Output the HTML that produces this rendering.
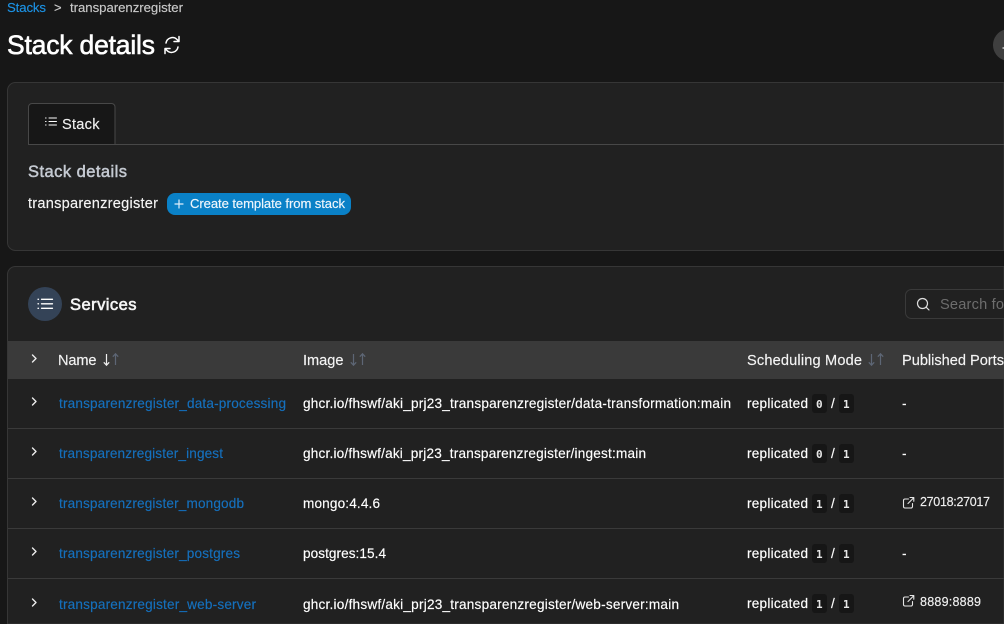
<!DOCTYPE html>
<html><head><meta charset="utf-8"><style>
html,body{margin:0;padding:0;background:#171717;width:1004px;height:624px;overflow:hidden}
svg{display:block}
text{font-family:"Liberation Sans",sans-serif;font-size:13.6px;color:#fff;fill:currentColor;stroke:currentColor;stroke-width:.15}
.m{font-family:"DejaVu Sans Mono",monospace;font-size:11px;font-weight:bold;color:#e8e8e8;stroke-width:0}
.l{color:#1570bd}
.h{color:#f4f4f4;font-size:14.6px}
.p{font-size:12.5px;color:#f0f0f0}
.i{fill:none;stroke:#fff;stroke-width:1.3;stroke-linecap:round;stroke-linejoin:round}
.c{fill:none;stroke:#eee;stroke-width:1.4;stroke-linecap:round;stroke-linejoin:round}
</style></head><body>
<svg width="1004" height="624" viewBox="0 0 1004 624" xmlns="http://www.w3.org/2000/svg">
<rect width="1004" height="624" fill="#171717"/>

<text x="7" y="12" textLength="39" style="font-size:13.2px;color:#1c92e4">Stacks</text>
<text x="54" y="12" style="font-size:13px;color:#ccc">&gt;</text>
<text x="70" y="12" textLength="113" style="font-size:13.2px;color:#c9c9c9">transparenzregister</text>

<text x="7" y="54" textLength="148" style="font-size:26.500px;stroke-width:.6">Stack details</text>
<g fill="none" stroke="#fff" stroke-width="1.5" stroke-linecap="round" stroke-linejoin="round">
<path d="M166 43a6.5 6.5 0 0 1 11-3.5l2 2M179 36.500v5h-5"/>
<path d="M178 47a6.500 6.500 0 0 1-11 3.500l-2-2M165 53.500v-5h5"/>
</g>
<path d="M1004 29.800A16 16 0 0 0 1004 60.200Z" fill="#3f3f3f"/>
<path d="M1002.500 47h1.500v2h-1.500z" fill="#aaa"/>

<path d="M1004 82.500H15.500a8 8 0 0 0-8 8V242.500a8 8 0 0 0 8 8H1004Z" fill="#212121" stroke="#363636"/>
<path d="M28.500 144.500V107a3.500 3.500 0 0 1 3.500-3.500h79.500a3.500 3.500 0 0 1 3.500 3.500v37.500z" fill="#171717" stroke="#484848"/>
<path d="M28 144.500H1004" stroke="#484848"/>
<path class="i" style="stroke-width:1" d="M49 118h7.500M49 121.500h7.500M49 125h7.500M45.500 118h.6M45.500 121.500h.6M45.500 125h.6"/>
<text x="62" y="129" textLength="37.500" style="font-size:14.6px;color:#f1f1f1">Stack</text>

<text x="28" y="177" textLength="99" style="font-size:16.500px;stroke-width:.5;color:#c5cad2">Stack details</text>
<text x="28" y="208" textLength="130" style="font-size:14.6px;color:#f5f5f5">transparenzregister</text>
<rect x="167" y="193" width="184" height="22" rx="8" fill="#0a81c7"/>
<path d="M175 204h8M179 200v8" stroke="#dfeefa" stroke-width="1.200" stroke-linecap="round" fill="none"/>
<text x="190" y="208" textLength="155" style="font-size:13.100px;color:#eef6fc">Create template from stack</text>

<path d="M1004 266.500H15.500a8 8 0 0 0-8 8V624H1004Z" fill="#212121" stroke="#363636"/>
<circle cx="45" cy="304" r="17" fill="#344357"/>
<path class="i" d="M41.500 299.300h11M41.500 303.800h11M41.500 308.300h11M38 299.300h.5M38 303.800h.5M38 308.300h.5"/>
<text x="70" y="310" textLength="66.500" style="font-size:16.500px;stroke-width:.6;color:#f5f5f5">Services</text>

<path d="M1004 289.500H911.500a6 6 0 0 0-6 6v17a6 6 0 0 0 6 6H1004" fill="#212121" stroke="#3a3a3a"/>
<circle cx="922.500" cy="303.500" r="5" fill="none" stroke="#ddd" stroke-width="1.200"/>
<path d="M926.300 307.300l2.700 2.700" stroke="#ddd" stroke-width="1.200" stroke-linecap="round"/>
<text x="940" y="309" textLength="64" style="font-size:14.6px;color:#6d6d6d;stroke-width:0">Search fo</text>

<rect x="8" y="341" width="996" height="38" fill="#3a3a3a"/>
<path class="c" d="M32.500 355l3.500 3.500-3.500 3.500"/>
<text class="h" x="58" y="365" textLength="38.500">Name</text>
<path d="M106.500 354v11M103.800 362.300l2.700 2.900 2.700-2.900" fill="none" stroke="#eee" stroke-width="1.200"/>
<path d="M115.500 365v-11M112.800 356.700l2.700-2.900 2.700 2.900" fill="none" stroke="#5d6675" stroke-width="1.200"/>
<text class="h" x="303" y="365" textLength="40.500">Image</text>
<path d="M353.500 354v11M350.800 362.300l2.700 2.900 2.700-2.900" fill="none" stroke="#5d6675" stroke-width="1.200"/>
<path d="M362.500 365v-11M359.800 356.700l2.700-2.900 2.700 2.900" fill="none" stroke="#5d6675" stroke-width="1.200"/>
<text class="h" x="747" y="365" textLength="115">Scheduling Mode</text>
<path d="M871.500 354v11M868.800 362.300l2.700 2.900 2.700-2.900" fill="none" stroke="#5d6675" stroke-width="1.200"/>
<path d="M880.500 365v-11M877.800 356.700l2.700-2.900 2.700 2.900" fill="none" stroke="#5d6675" stroke-width="1.200"/>
<text class="h" x="902" y="365" textLength="102">Published Ports</text>

<path stroke="#3a3a3a" d="M8 428.500H1004M8 478.500H1004M8 528.500H1004M8 578.500H1004"/>

<path class="c" d="M32.500 398l3.500 3.500-3.500 3.500"/>
<text class="l" x="59" y="408" textLength="227">transparenzregister_data-processing</text>
<text x="303" y="408" textLength="428">ghcr.io/fhswf/aki_prj23_transparenzregister/data-transformation:main</text>
<text x="747" y="408" textLength="61">replicated</text>
<rect x="812" y="394" width="15" height="19" rx="3" fill="#161616"/>
<text class="m" x="816" y="408">0</text>
<text x="831" y="408" textLength="4.500">/</text>
<rect x="839" y="394" width="15" height="19" rx="3" fill="#161616"/>
<text class="m" x="843" y="408">1</text>
<text x="902" y="408">-</text>

<path class="c" d="M32.500 448l3.500 3.500-3.500 3.500"/>
<text class="l" x="59" y="458" textLength="164">transparenzregister_ingest</text>
<text x="303" y="458" textLength="343">ghcr.io/fhswf/aki_prj23_transparenzregister/ingest:main</text>
<text x="747" y="458" textLength="61">replicated</text>
<rect x="812" y="444" width="15" height="19" rx="3" fill="#161616"/>
<text class="m" x="816" y="458">0</text>
<text x="831" y="458" textLength="4.500">/</text>
<rect x="839" y="444" width="15" height="19" rx="3" fill="#161616"/>
<text class="m" x="843" y="458">1</text>
<text x="902" y="458">-</text>

<path class="c" d="M32.500 498l3.500 3.500-3.500 3.500"/>
<text class="l" x="59" y="508" textLength="185">transparenzregister_mongodb</text>
<text x="303" y="508" textLength="77">mongo:4.4.6</text>
<text x="747" y="508" textLength="61">replicated</text>
<rect x="812" y="494" width="15" height="19" rx="3" fill="#161616"/>
<text class="m" x="816" y="508">1</text>
<text x="831" y="508" textLength="4.500">/</text>
<rect x="839" y="494" width="15" height="19" rx="3" fill="#161616"/>
<text class="m" x="843" y="508">1</text>
<path d="M908.500 499h-3.500a1.500 1.500 0 0 0-1.500 1.500v6a1.500 1.500 0 0 0 1.500 1.500h6a1.500 1.500 0 0 0 1.500-1.500v-3M908 503.500l5.500-5.500M910 497.500h3.800v3.800" fill="none" stroke="#e6e6e6" stroke-width="1.100" stroke-linecap="round" stroke-linejoin="round"/>
<text class="p" x="920" y="506" textLength="70">27018:27017</text>

<path class="c" d="M32.500 548l3.500 3.500-3.500 3.500"/>
<text class="l" x="59" y="558" textLength="181">transparenzregister_postgres</text>
<text x="303" y="558" textLength="83">postgres:15.4</text>
<text x="747" y="558" textLength="61">replicated</text>
<rect x="812" y="544" width="15" height="19" rx="3" fill="#161616"/>
<text class="m" x="816" y="558">1</text>
<text x="831" y="558" textLength="4.500">/</text>
<rect x="839" y="544" width="15" height="19" rx="3" fill="#161616"/>
<text class="m" x="843" y="558">1</text>
<text x="902" y="558">-</text>

<path class="c" d="M32.500 599l3.500 3.500-3.500 3.500"/>
<text class="l" x="59" y="609" textLength="197">transparenzregister_web-server</text>
<text x="303" y="609" textLength="376">ghcr.io/fhswf/aki_prj23_transparenzregister/web-server:main</text>
<text x="747" y="608" textLength="61">replicated</text>
<rect x="812" y="594" width="15" height="19" rx="3" fill="#161616"/>
<text class="m" x="816" y="608">1</text>
<text x="831" y="608" textLength="4.500">/</text>
<rect x="839" y="594" width="15" height="19" rx="3" fill="#161616"/>
<text class="m" x="843" y="608">1</text>
<path d="M908.500 597h-3.500a1.500 1.500 0 0 0-1.500 1.500v6a1.500 1.500 0 0 0 1.500 1.500h6a1.500 1.500 0 0 0 1.500-1.500v-3M908 601.500l5.500-5.500M910 595.500h3.800v3.800" fill="none" stroke="#e6e6e6" stroke-width="1.100" stroke-linecap="round" stroke-linejoin="round"/>
<text class="p" x="920" y="606" textLength="61">8889:8889</text>
</svg>
</body></html>
